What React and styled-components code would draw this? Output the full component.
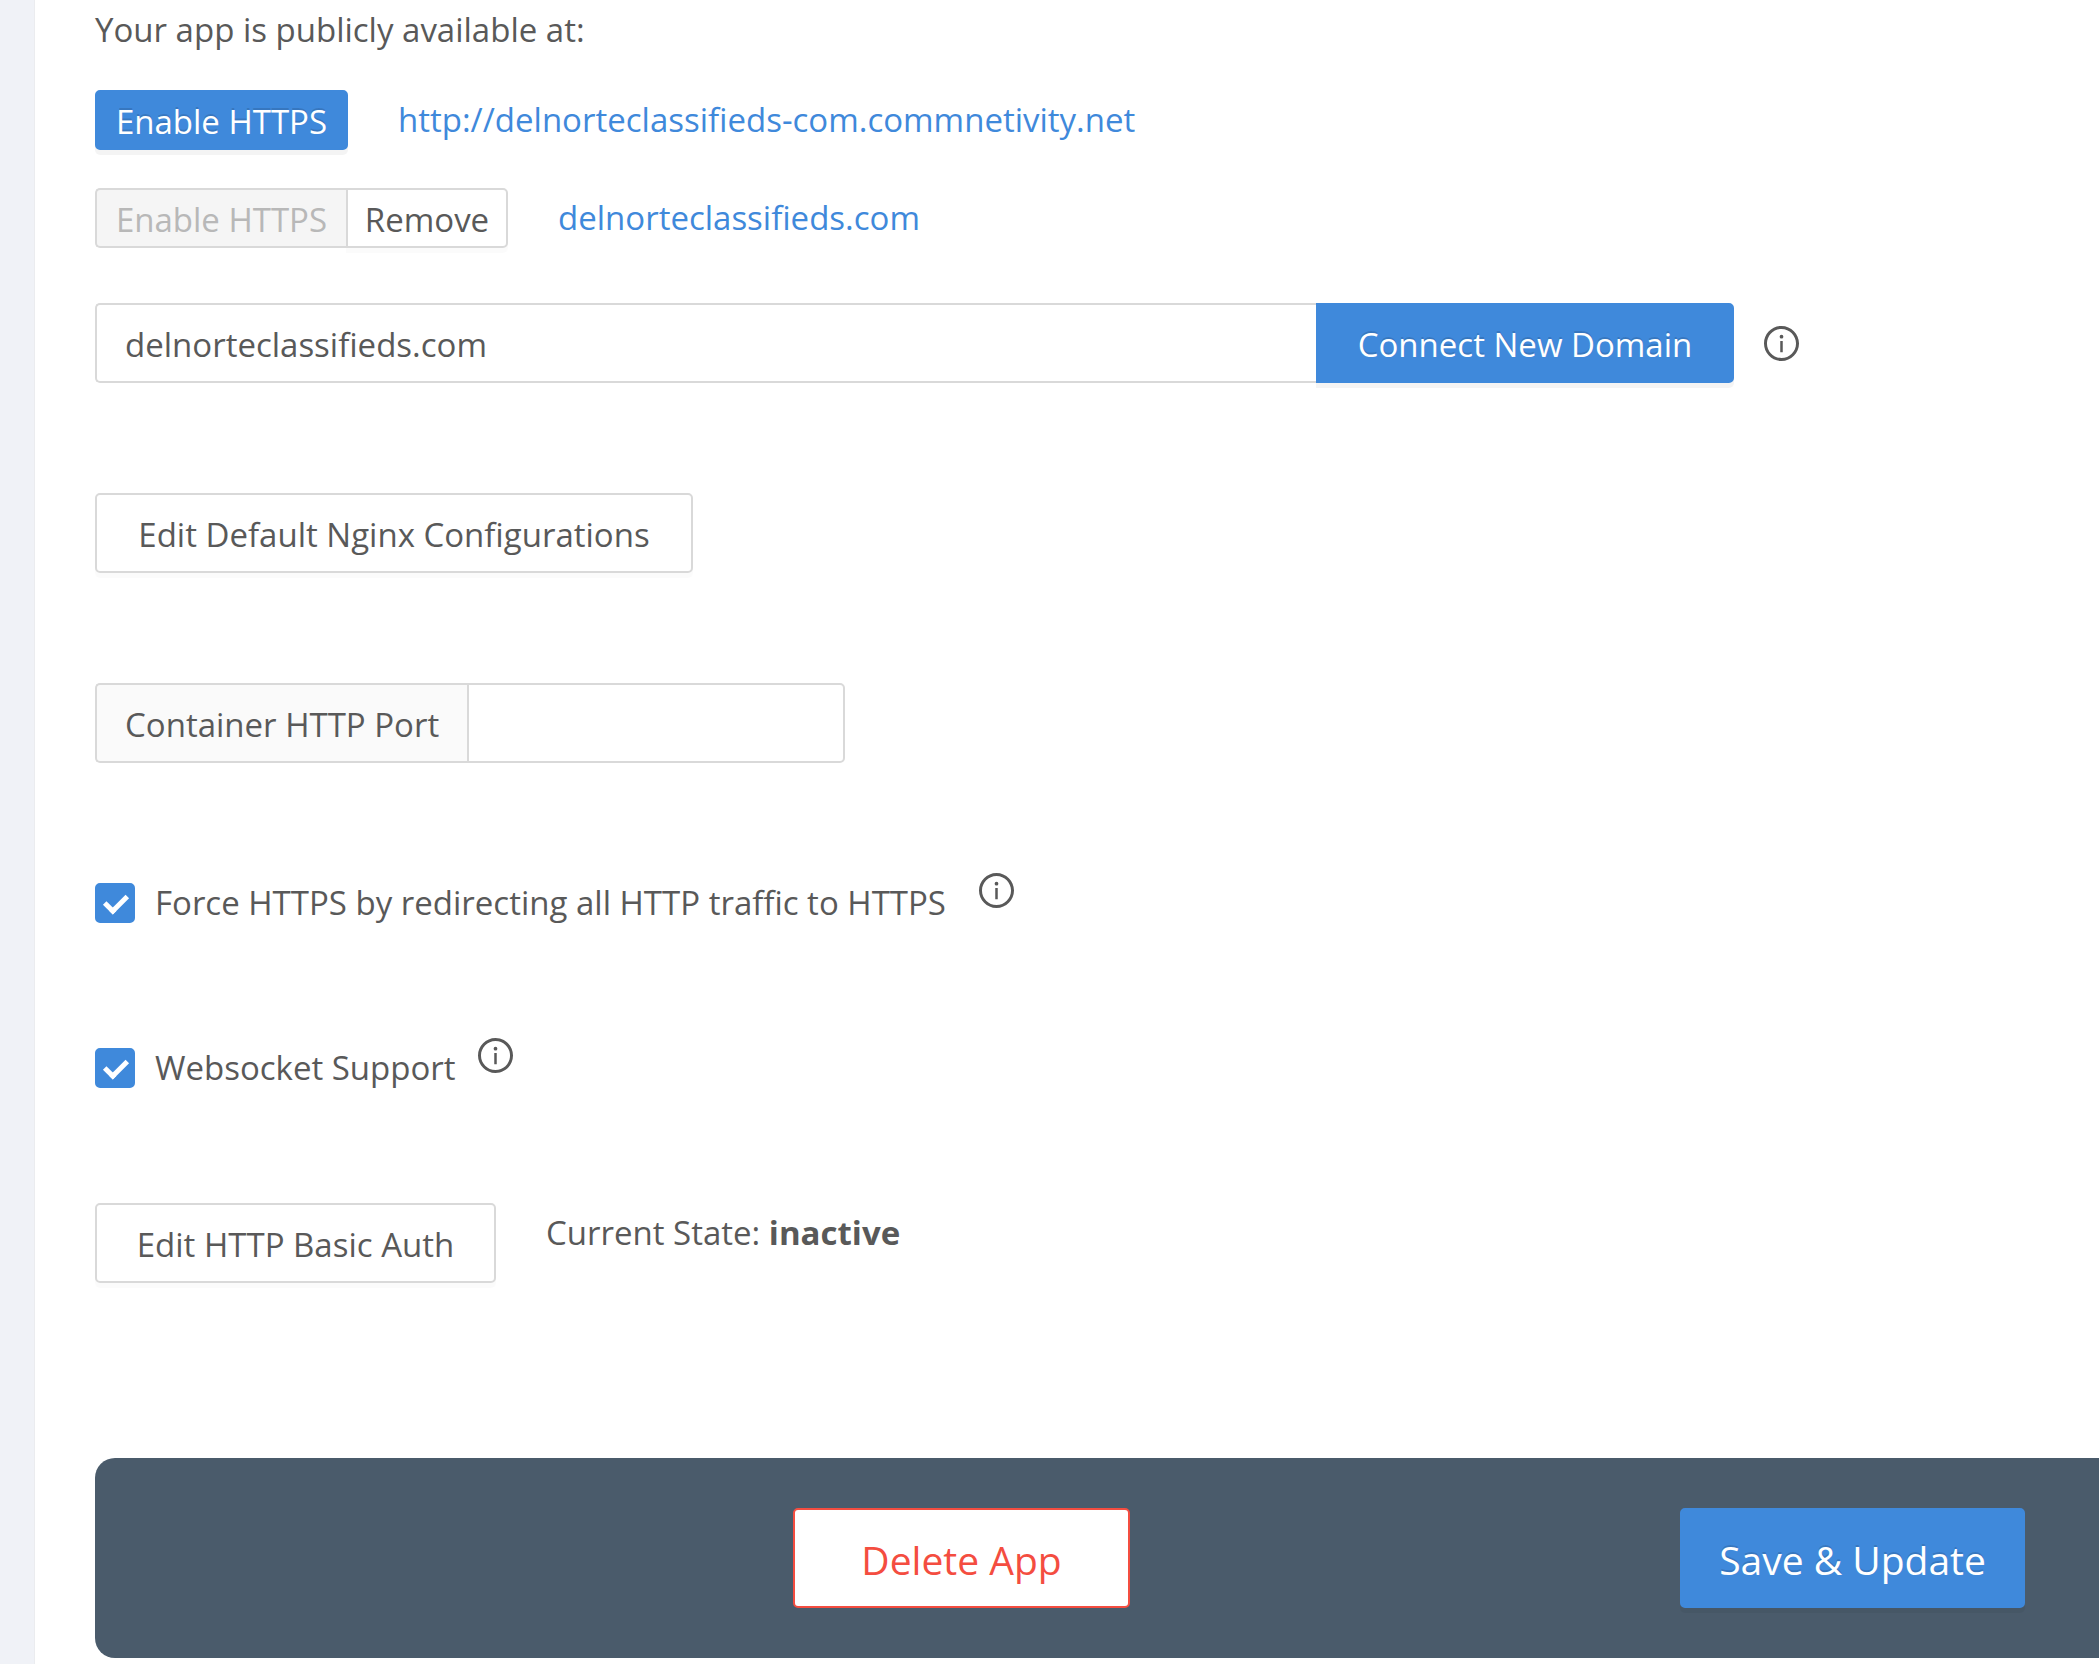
import React from "react";
import styled, { createGlobalStyle, css } from "styled-components";

const colors = {
  text: "#595959",
  primary: "#3f89db",
  danger: "#f44d40",
  border: "#d9d9d9",
  page: "#f0f2f7",
  bar: "#4a5b6b",
};

const GlobalStyle = createGlobalStyle`
  *, *::before, *::after { box-sizing: border-box; }
  body {
    margin: 0;
    background: ${colors.page};
    color: ${colors.text};
    font-family: "Open Sans", "Noto Sans", sans-serif;
    font-size: 33px;
    line-height: 52px;
  }
`;

const Page = styled.main`
  min-height: 100vh;
  padding-left: 34px;
`;

const Panel = styled.div`
  min-height: 100vh;
  padding: 4px 0 6px 60px;
  border-left: 1px solid #ebecef;
  background: #fff;
`;

const Intro = styled.p`
  margin: 0 0 34px;
`;

const Row = styled.div`
  display: flex;
  align-items: ${(p) => p.$align || "flex-start"};
  gap: ${(p) => p.$gap || 50}px;
  margin-bottom: ${(p) => p.$after}px;
`;

const Group = styled.div`
  display: flex;
`;

const buttonKinds = {
  default: css`
    color: ${colors.text};
    background: #fff;
    border-color: ${colors.border};
    box-shadow: 0 5px 0 rgba(0, 0, 0, 0.016);
  `,
  primary: css`
    color: #fff;
    background: ${colors.primary};
    border-color: ${colors.primary};
    text-shadow: 0 -2px 0 rgba(0, 0, 0, 0.12);
    box-shadow: 0 5px 0 rgba(0, 0, 0, 0.045);
  `,
  danger: css`
    color: ${colors.danger};
    background: #fff;
    border-color: ${colors.danger};
  `,
};

const buttonSizes = {
  small: css`
    height: 60px;
    padding: 4px 16px 0;
  `,
  middle: css`
    height: 80px;
    padding: 4px 36px 0;
  `,
  large: css`
    height: 100px;
    padding: 4px 36px 0;
    font-size: 39px;
  `,
};

const Button = styled.button`
  flex: none;
  min-width: ${(p) => p.$width}px;
  border: 2px solid;
  border-radius: 5px;
  font: inherit;
  line-height: 52px;
  white-space: nowrap;
  cursor: pointer;
  ${(p) => buttonKinds[p.$kind || "default"]}
  ${(p) => buttonSizes[p.$size || "middle"]}

  &:disabled {
    color: #b8b8b8;
    background: #f5f5f5;
    box-shadow: none;
    cursor: not-allowed;
  }

  ${Group} > &:not(:last-child) {
    border-right: 0;
    border-radius: 5px 0 0 5px;
  }

  ${Group} > * + & {
    border-radius: 0 5px 5px 0;
  }
`;

const Link = styled.a`
  color: ${colors.primary};
  line-height: 60px;
  text-decoration: none;
`;

const State = styled.span`
  line-height: 60px;
`;

const TextInput = styled.input`
  flex: 1;
  min-width: 0;
  height: 80px;
  padding: 2px 28px 0;
  border: 2px solid ${colors.border};
  border-radius: ${(p) => (p.$join === "left" ? "0 5px 5px 0" : "5px 0 0 5px")};
  ${(p) => p.$join === "right" && "border-right: 0;"}
  background: #fff;
  color: inherit;
  font: inherit;
  outline: 0;
`;

const DomainField = styled(Group)`
  flex: 0 1 1639px;
`;

const PortField = styled(Group)`
  width: 750px;
`;

const Addon = styled.label`
  flex: none;
  width: 372px;
  padding: 14px 0 0 28px;
  border: 2px solid ${colors.border};
  border-right: 0;
  border-radius: 5px 0 0 5px;
  background: #fafafa;
`;

const Check = styled.label`
  display: flex;
  align-items: center;
  gap: 20px;
  min-width: ${(p) => p.$width}px;
  line-height: 60px;
  cursor: pointer;
`;

const CheckBox = styled.input`
  appearance: none;
  display: grid;
  place-items: center;
  width: 40px;
  height: 40px;
  margin: 0;
  border-radius: 5px;
  border: 2px solid ${colors.border};
  background: #fff;

  &:checked {
    border-color: ${colors.primary};
    background: ${colors.primary};
  }

  &:checked::after {
    content: "";
    width: 14px;
    height: 23px;
    border: solid #fff;
    border-width: 0 5px 5px 0;
    transform: translate(1px, -2px) rotate(45deg);
  }
`;

const Icon = styled.svg`
  flex: none;
  width: 35px;
  height: 35px;
  fill: currentColor;
`;

const ActionBar = styled.footer`
  display: flex;
  justify-content: flex-end;
  gap: 550px;
  padding: 50px 74px 50px 0;
  border-radius: 20px 0 0 20px;
  background: ${colors.bar};
`;

function InfoIcon() {
  return (
    <Icon viewBox="64 64 896 896" role="img" aria-label="Info">
      <path d="M512 64C264.6 64 64 264.6 64 512s200.6 448 448 448 448-200.6 448-448S759.4 64 512 64zm0 820c-205.4 0-372-166.6-372-372s166.6-372 372-372 372 166.6 372 372-166.6 372-372 372z" />
      <path d="M464 336a48 48 0 1 0 96 0 48 48 0 1 0-96 0zm72 112h-48c-4.4 0-8 3.6-8 8v272c0 4.4 3.6 8 8 8h48c4.4 0 8-3.6 8-8V456c0-4.4-3.6-8-8-8z" />
    </Icon>
  );
}

function Option({ label, width, after }) {
  return (
    <Row $gap={20} $after={after}>
      <Check $width={width}>
        <CheckBox type="checkbox" defaultChecked />
        {label}
      </Check>
      <InfoIcon />
    </Row>
  );
}

export default function App() {
  return (
    <Page>
      <GlobalStyle />
      <Panel>
        <Intro>Your app is publicly available at:</Intro>
        <Row $after={38}>
          <Button $kind="primary" $size="small" $width={253}>Enable HTTPS</Button>
          <Link href="http://delnorteclassifieds-com.commnetivity.net">
            http://delnorteclassifieds-com.commnetivity.net
          </Link>
        </Row>
        <Row $after={55}>
          <Group>
            <Button $size="small" $width={251} disabled>Enable HTTPS</Button>
            <Button $size="small" $width={162}>Remove</Button>
          </Group>
          <Link href="http://delnorteclassifieds.com">delnorteclassifieds.com</Link>
        </Row>
        <Row $gap={30} $after={110} $align="center">
          <DomainField>
            <TextInput $join="right" aria-label="Domain" defaultValue="delnorteclassifieds.com" />
            <Button $kind="primary" $width={418}>Connect New Domain</Button>
          </DomainField>
          <InfoIcon />
        </Row>
        <Row $after={110}>
          <Button $width={598}>Edit Default Nginx Configurations</Button>
        </Row>
        <Row $after={110}>
          <PortField>
            <Addon htmlFor="port">Container HTTP Port</Addon>
            <TextInput $join="left" id="port" />
          </PortField>
        </Row>
        <Option label="Force HTTPS by redirecting all HTTP traffic to HTTPS" width={864} after={105} />
        <Option label="Websocket Support" width={363} after={105} />
        <Row $after={175}>
          <Button $width={401}>Edit HTTP Basic Auth</Button>
          <State>Current State: <b>inactive</b></State>
        </Row>
        <ActionBar>
          <Button $kind="danger" $size="large" $width={337}>Delete App</Button>
          <Button $kind="primary" $size="large" $width={345}>Save &amp; Update</Button>
        </ActionBar>
      </Panel>
    </Page>
  );
}
